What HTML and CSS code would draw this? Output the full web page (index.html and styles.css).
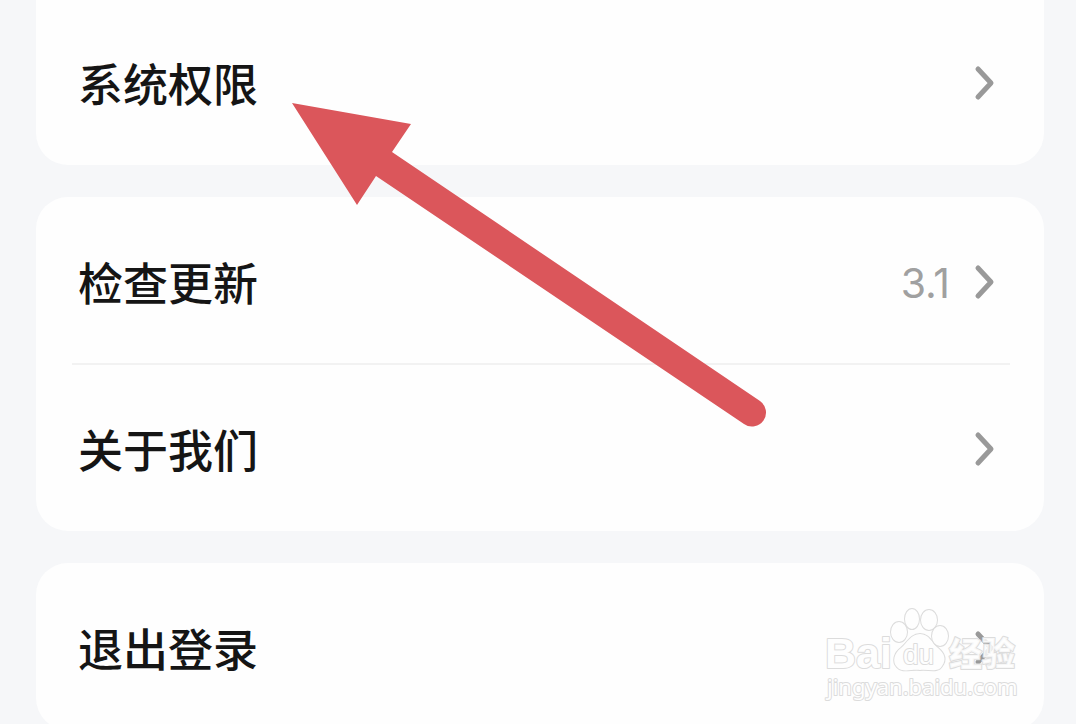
FILE: index.html
```html
<!DOCTYPE html>
<html lang="zh-CN">
<head>
<meta charset="utf-8">
<meta name="viewport" content="width=device-width, initial-scale=1">
<title>设置</title>
<link rel="stylesheet" href="styles.css">
</head>
<body>
<main class="settings">
  <section class="card card-continued">
    <button class="row" type="button"><span class="label">系统权限</span><svg class="chevron" viewBox="0 0 24 36" aria-hidden="true"><path d="M4 4 17 18 4 32"/></svg></button>
  </section>
  <section class="card">
    <button class="row" type="button"><span class="label">检查更新</span><span class="value">3.1</span><svg class="chevron" viewBox="0 0 24 36" aria-hidden="true"><path d="M4 4 17 18 4 32"/></svg></button>
    <button class="row" type="button"><span class="label">关于我们</span><svg class="chevron" viewBox="0 0 24 36" aria-hidden="true"><path d="M4 4 17 18 4 32"/></svg></button>
  </section>
  <section class="card">
    <button class="row" type="button"><span class="label">退出登录</span><svg class="chevron" viewBox="0 0 24 36" aria-hidden="true"><path d="M4 4 17 18 4 32"/></svg></button>
  </section>
</main>
<svg class="arrow" viewBox="0 0 476 326" aria-hidden="true">
  <path d="M0 0 119 21 100 49 468 298A14 14 0 0 1 452 321L84 73 65 102Z"/>
</svg>
<svg class="watermark" viewBox="0 0 200 96" role="img" aria-label="Baidu 经验 jingyan.baidu.com">
  <text class="brand" x="2" y="63">Bai</text>
  <g class="paw">
    <path d="M97 29C88 29 84 38 78 43C71 48 69 57 74 62C79 68 88 64 97 65C106 64 115 68 119 61C124 54 121 48 115 43C109 38 106 29 97 29Z"/>
    <ellipse cx="76" cy="27" rx="8" ry="10"/>
    <ellipse cx="89" cy="14" rx="7" ry="10"/>
    <ellipse cx="106" cy="15" rx="8" ry="10"/>
    <ellipse cx="117" cy="31" rx="8" ry="10"/>
  </g>
  <text class="du" x="80" y="59">du</text>
  <text class="product" x="126" y="61">经验</text>
  <text class="url" x="4" y="90">jingyan.baidu.com</text>
</svg>
</body>
</html>
```
FILE: styles.css
```css
* {
  box-sizing: border-box;
}

body {
  margin: 0;
  height: 100vh;
  overflow: hidden;
  position: relative;
  background: #f6f7f9;
  color: #151515;
  font-family: "Noto Sans CJK SC", sans-serif;
}

.settings {
  display: flex;
  flex-direction: column;
  gap: 32px;
  padding: 0 32px 0 36px;
}

.card {
  background: #fefefe;
  border-radius: 32px;
}

.card-continued {
  border-radius: 0 0 32px 32px;
}

.row {
  display: flex;
  align-items: center;
  width: 100%;
  padding: 52px 46px 50px 42px;
  border: 0;
  background: none;
  color: inherit;
  font: inherit;
  text-align: left;
  position: relative;
}

.card-continued .row {
  padding-top: 50px;
}

.row + .row::before {
  content: "";
  position: absolute;
  top: -1px;
  left: 36px;
  right: 34px;
  height: 2px;
  background: #f2f2f2;
}

.label {
  flex: 1;
  font-size: 45px;
  font-weight: 500;
  line-height: 65px;
}

.value {
  margin-right: 24px;
  padding-top: 4px;
  color: #a0a0a0;
  font-family: Inter, sans-serif;
  font-size: 41px;
  line-height: 61px;
}

.chevron {
  width: 24px;
  height: 36px;
  fill: none;
  stroke: #999;
  stroke-width: 5;
  stroke-linecap: round;
  stroke-linejoin: round;
}

.arrow {
  position: absolute;
  top: 103px;
  left: 292px;
  width: 476px;
  height: 326px;
  fill: #db565b;
  pointer-events: none;
}

.watermark {
  position: absolute;
  top: 605px;
  right: 53px;
  width: 200px;
  height: 96px;
  overflow: visible;
  fill: #fefefe;
  stroke: #dcdcdc;
  stroke-width: 2;
  stroke-linejoin: round;
  paint-order: stroke;
  pointer-events: none;
}

.brand {
  font: bold 43px "Liberation Sans", sans-serif;
}

.du {
  font: 28px "Liberation Sans", sans-serif;
}

.product {
  font: 900 33px "Noto Sans CJK SC", sans-serif;
  fill: #fefefed0;
}

.url {
  font: 22px "Noto Sans", sans-serif;
}
```
